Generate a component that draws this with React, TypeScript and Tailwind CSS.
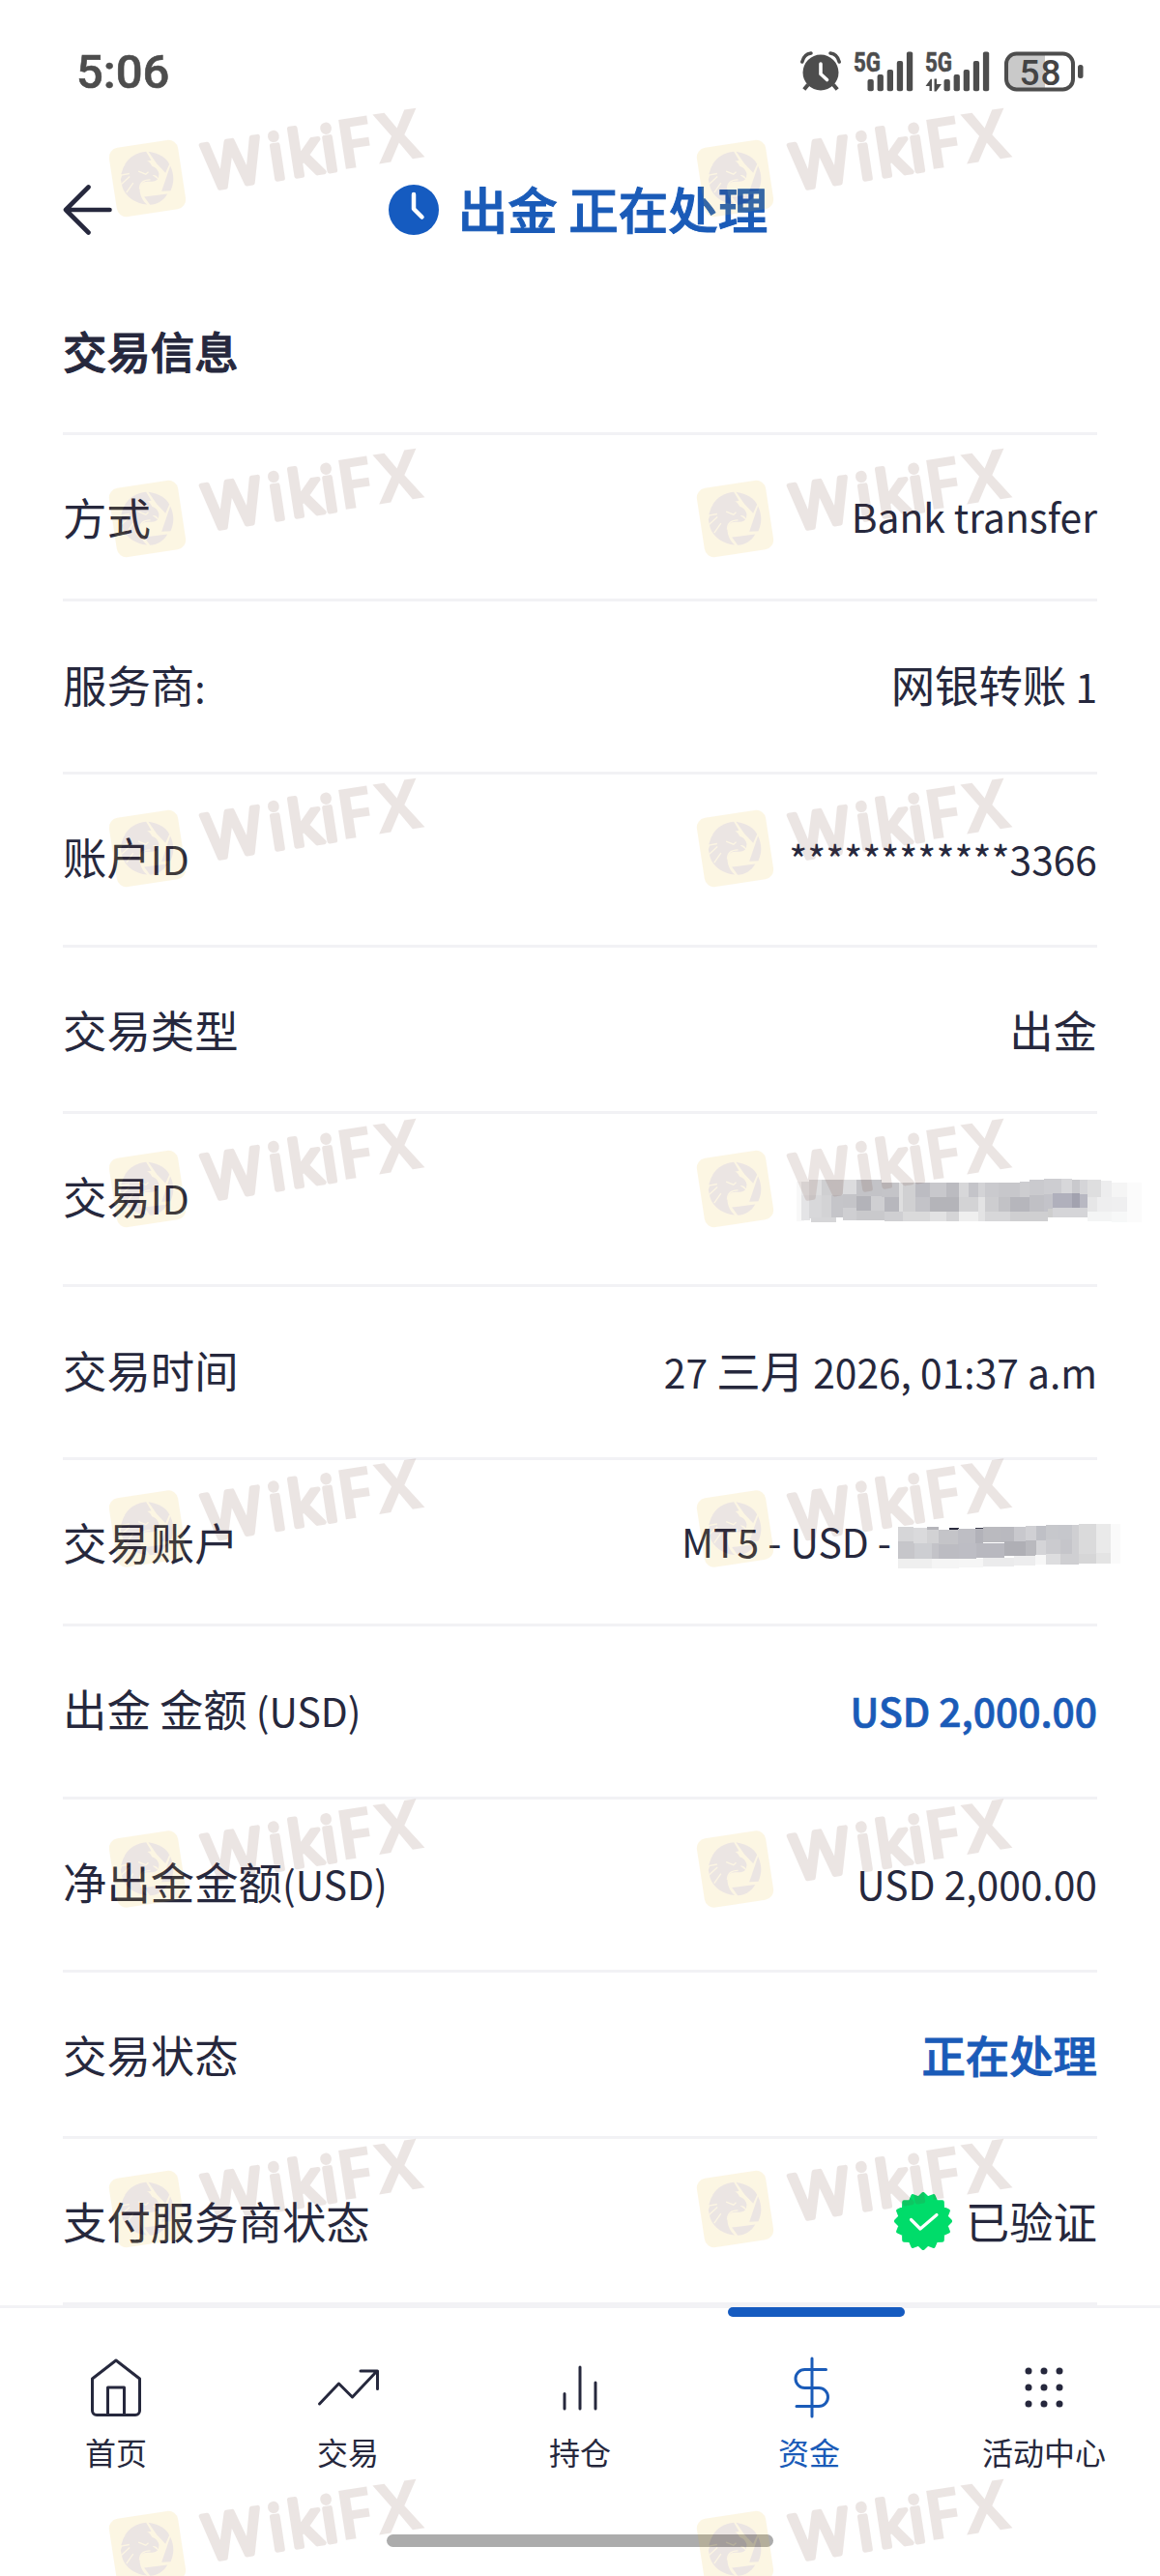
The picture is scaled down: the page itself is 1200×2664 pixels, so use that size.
import React from 'react';

type Detail = {
  label: string;
  value: React.ReactNode;
  tall?: boolean;
  lower?: boolean;
};

type Mosaic = [number, number, number, number, string][];

// x, y, width, height, color of every block
const ID_BLOCKS: Mosaic = [
  [0, 3, 8, 41, '#f8f8f8'], [5, 3, 9, 14, '#e9e9ea'], [5, 17, 9, 26, '#e4e4e6'],
  [13, 1, 13, 16, '#dededf'], [13, 17, 13, 24, '#d8d8da'], [26, 1, 22, 17, '#cfcfd1'],
  [26, 17, 10, 24, '#d3d3d5'], [36, 17, 12, 23, '#c5c5c9'], [15, 40, 26, 5, '#d6d6d8'],
  [48, 1, 14, 16, '#dcdcde'], [48, 16, 14, 14, '#c4c4c8'], [48, 30, 14, 13, '#cfcfd2'],
  [62, 1, 26, 17, '#c3c3c7'], [62, 18, 15, 15, '#b3b3b9'], [77, 18, 14, 15, '#cfcfd2'],
  [62, 33, 29, 10, '#c9c9cc'], [88, 4, 18, 15, '#c4c4c8'], [91, 19, 15, 15, '#b7b7bd'],
  [91, 34, 19, 10, '#cfcfd2'], [106, 4, 4, 30, '#dededf'], [110, 4, 13, 30, '#d0d0d2'],
  [110, 34, 28, 10, '#dadadb'], [123, 4, 15, 15, '#bcbcc2'], [123, 19, 15, 15, '#c3c3c8'],
  [138, 4, 17, 15, '#c8c8cc'], [138, 19, 30, 15, '#b4b4b9'], [138, 34, 17, 10, '#e2e2e3'],
  [155, 4, 13, 15, '#bbbbc0'], [155, 34, 13, 10, '#d5d5d7'], [168, 4, 10, 15, '#d7d7d9'],
  [178, 4, 10, 15, '#c4c4c9'], [168, 19, 20, 15, '#d3d3d5'], [168, 34, 20, 10, '#efefef'],
  [188, 4, 7, 15, '#d3d3d6'], [188, 19, 7, 25, '#e3e3e4'], [195, 4, 14, 15, '#cacace'],
  [195, 19, 14, 15, '#cdcdd0'], [195, 34, 28, 10, '#d7d7d9'], [209, 4, 22, 15, '#c7c7cb'],
  [209, 19, 12, 15, '#c2c2c6'], [221, 19, 20, 15, '#b6b6bc'], [221, 34, 39, 10, '#cfcfd1'],
  [231, 3, 10, 16, '#cdcdd0'], [241, 1, 15, 16, '#cacace'], [241, 17, 15, 17, '#c0c0c5'],
  [256, 0, 18, 16, '#cdcdd1'], [256, 16, 9, 18, '#c3c3c9'], [260, 31, 26, 9, '#cecece'],
  [265, 15, 20, 15, '#b0b0bc'], [274, 0, 11, 15, '#d7d7da'], [285, 1, 9, 14, '#c9c9cd'],
  [285, 15, 8, 15, '#a2a2af'], [293, 1, 8, 15, '#d5d5d8'], [293, 16, 8, 14, '#b8b8c2'],
  [265, 30, 36, 10, '#d5d5d8'], [301, 1, 14, 18, '#dededf'], [301, 19, 10, 15, '#e6e6e7'],
  [301, 34, 25, 10, '#f4f5f5'], [311, 19, 15, 15, '#eeeeef'], [315, 2, 11, 17, '#ededee'],
  [326, 4, 16, 15, '#f5f5f5'], [326, 19, 16, 15, '#efeff0'], [326, 34, 16, 11, '#f7f8f8'],
  [342, 4, 15, 41, '#fbfbfb'],
];

const ACCOUNT_BLOCKS: Mosaic = [
  [0, 3, 16, 17, '#d6d6d8'], [0, 18, 17, 18, '#c6c6ca'], [0, 36, 35, 10, '#efefef'],
  [16, 4, 14, 16, '#dadadc'], [17, 20, 18, 16, '#cdced2'], [30, 3, 12, 3, '#b5b5ba'],
  [30, 6, 12, 14, '#d2d2d4'], [35, 20, 7, 16, '#c3c3c8'], [42, 6, 20, 15, '#c4c4c8'],
  [42, 21, 21, 16, '#bcbcc2'], [35, 36, 28, 10, '#f5f5f5'], [53, 4, 10, 2, '#2a2b3e'],
  [80, 4, 8, 2, '#3c3d4e'], [62, 5, 18, 16, '#bebec4'], [63, 20, 18, 16, '#bdbdc4'],
  [63, 36, 25, 9, '#f6f6f6'], [80, 5, 8, 15, '#b2b2b9'], [88, 3, 18, 16, '#bababf'],
  [81, 20, 29, 15, '#b8b8bf'], [88, 35, 32, 9, '#ebebec'], [106, 3, 14, 16, '#b9b9bf'],
  [110, 18, 22, 15, '#afafb5'], [120, 3, 12, 15, '#c8c8cd'], [120, 33, 22, 10, '#ededee'],
  [132, 2, 11, 15, '#d0d0d4'], [132, 17, 11, 16, '#b9b9be'], [143, 2, 10, 15, '#bfc0c6'],
  [143, 17, 10, 15, '#d4d4d7'], [142, 32, 11, 10, '#f7f7f7'], [153, 1, 12, 15, '#c7c8cc'],
  [153, 16, 15, 16, '#cbcbcf'], [153, 31, 15, 11, '#dddddf'], [165, 1, 15, 15, '#c6c7cc'],
  [168, 16, 12, 15, '#c5c5ca'], [168, 31, 12, 11, '#cfcfd2'], [180, 1, 7, 41, '#cfcfd2'],
  [187, 0, 18, 31, '#dadadb'], [187, 31, 18, 10, '#d6d6d7'], [205, 0, 15, 31, '#eaeaea'],
  [205, 30, 15, 11, '#e4e4e4'], [220, 0, 10, 41, '#fafafa'],
];

const MosaicStrip = ({ blocks, width, height }: { blocks: Mosaic; width: number; height: number }) => (
  <svg width={width} height={height} viewBox={`0 0 ${width} ${height}`} shapeRendering="crispEdges">
    {blocks.map(([x, y, w, h, fill], i) => (
      <rect key={i} x={x} y={y} width={w} height={h} fill={fill} />
    ))}
  </svg>
);

// Latin letters and digits are set a little smaller than the Chinese around them
const Mixed = ({ children }: { children: string }) => (
  <span className="whitespace-pre">
    {children.split(/([\u4e00-\u9fff]+)/).map((part, i) =>
      i % 2 === 0 ? (
        <span key={i} className="text-[40.75px]">
          {part}
        </span>
      ) : (
        part
      )
    )}
  </span>
);

const VerifiedBadge = () => {
  const points: string[] = [];
  for (let i = 0; i < 32; i++) {
    const radius = i % 2 === 0 ? 28 : 24;
    const angle = (i * Math.PI) / 16 - Math.PI / 2;
    points.push(`${(30 + radius * Math.cos(angle)).toFixed(2)},${(30 + radius * Math.sin(angle)).toFixed(2)}`);
  }
  return (
    <svg width="60" height="60" viewBox="0 0 60 60" fill="none">
      <polygon points={points.join(' ')} fill="#00dc6a" stroke="#00dc6a" strokeWidth="4" strokeLinejoin="round" />
      <path d="M17.5 28.5 27 38 44 23.5" stroke="#fff" strokeWidth="3.2" strokeLinecap="round" strokeLinejoin="round" />
    </svg>
  );
};

const DETAILS: Detail[] = [
  {
    label: '方式',
    value: (
      <span className="pb-1.5">
        <Mixed>Bank transfer</Mixed>
      </span>
    ),
  },
  { label: '服务商:', value: <Mixed>网银转账 1</Mixed>, tall: true, lower: true },
  { label: '账户ID', value: <Mixed>************3366</Mixed>, tall: true },
  { label: '交易类型', value: '出金' },
  {
    label: '交易ID',
    value: (
      <span className="mt-2.5 -mr-[46px]">
        <MosaicStrip blocks={ID_BLOCKS} width={357} height={45} />
      </span>
    ),
    tall: true,
  },
  { label: '交易时间', value: <Mixed>27 三月 2026, 01:37 a.m</Mixed>, tall: true, lower: true },
  {
    label: '交易账户',
    value: (
      <span className="-mr-6 flex items-center gap-[7px]">
        <span className="pb-1.5">
          <Mixed>MT5 - USD -</Mixed>
        </span>
        <span className="mt-[9px]">
          <MosaicStrip blocks={ACCOUNT_BLOCKS} width={230} height={46} />
        </span>
      </span>
    ),
  },
  {
    label: '出金 金额 (USD)',
    value: (
      <span className="font-medium text-[#1a5bb8] [-webkit-text-stroke:0.7px_#1a5bb8]">
        <Mixed>USD 2,000.00</Mixed>
      </span>
    ),
    tall: true,
  },
  { label: '净出金金额(USD)', value: <Mixed>USD 2,000.00</Mixed>, tall: true },
  {
    label: '交易状态',
    value: <span className="font-medium text-[#1a5bb8] [-webkit-text-stroke:0.9px_#1a5bb8]">正在处理</span>,
  },
  {
    label: '支付服务商状态',
    value: (
      <span className="flex items-center gap-3.5">
        <VerifiedBadge />
        已验证
      </span>
    ),
  },
];

const Signal = ({ data }: { data?: boolean }) => (
  <svg
    className="overflow-visible"
    width={data ? 67 : 62}
    height="42"
    viewBox={data ? '0 0 67 42' : '0 0 62 42'}
    fill="#4d4d4d"
  >
    <text
      x="0"
      y="20.5"
      textLength="28"
      lengthAdjust="spacingAndGlyphs"
      fontFamily="Roboto, sans-serif"
      fontWeight="700"
      fontSize="27.5"
      stroke="#4d4d4d"
      strokeWidth="0.6"
    >
      5G
    </text>
    {data && <path d="M0.5 36 6 28.5 7 29v12H4.5v-5zM9.5 28.5H12V34h5L11.5 41.5H9.5z" />}
    {[29, 24, 19, 10, 0.5].map((y, i) => (
      <rect key={i} x={(data ? 19.5 : 14.5) + i * 10.1} y={y} width="6.3" height={41.3 - y} rx="2" />
    ))}
  </svg>
);

const StatusBar = () => (
  <div className="flex h-[148px] items-center justify-between pr-[78px] pl-[79px] font-[Roboto,sans-serif] text-[#4d4d4d]">
    <span className="text-[49px] leading-none font-medium [-webkit-text-stroke:0.6px_#4d4d4d]">5:06</span>
    <div className="flex items-center">
      <svg width="42" height="42" viewBox="0 0 42 42" fill="none">
        <circle cx="21" cy="22" r="18.5" fill="#4d4d4d" />
        <path d="M1.8 11C3 6 6.5 2.5 11 2M40.2 11C39 6 35.5 2.5 31 2" stroke="#4d4d4d" strokeWidth="3.5" strokeLinecap="round" />
        <path d="M8 34.5 3.8 39.5M34 34.5l4.2 5" stroke="#4d4d4d" strokeWidth="4" />
        <path d="M21 13v10.5l6.5 6" stroke="#fff" strokeWidth="3.6" strokeLinecap="round" />
      </svg>
      <span className="ml-[13px] flex gap-3">
        <Signal />
        <Signal data />
      </span>
      <svg className="ml-[15px]" width="83" height="42" viewBox="0 0 83 42" fill="none">
        <path d="M12 2h30v38H12A10 10 0 0 1 2 30V12A10 10 0 0 1 12 2z" fill="#c9c9c9" />
        <rect x="2" y="2.5" width="69" height="37" rx="10.5" stroke="#4d4d4d" strokeWidth="4" />
        <rect x="76" y="14" width="5.5" height="14" rx="2.5" fill="#4d4d4d" />
        <text x="15.5" y="34.5" textLength="43" fontFamily="Roboto, sans-serif" fontWeight="500" fontSize="37" fill="#444">
          58
        </text>
      </svg>
    </div>
  </div>
);

const Header = () => (
  <header className="relative flex h-[138px] items-center justify-center pr-1">
    <button className="absolute left-[65px]" aria-label="Back">
      <svg width="52" height="52" viewBox="0 0 52 52" fill="none" stroke="#26283d" strokeWidth="4.6" strokeLinecap="round" strokeLinejoin="round">
        <path d="M26.5 2.5 3 26l23.5 23.5M3 26h45.5" />
      </svg>
    </button>
    <svg className="mr-5" width="52" height="52" viewBox="0 0 52 52" fill="none">
      <circle cx="26" cy="26" r="26" fill="#155bc0" />
      <path d="M26 10v15l8.5 8.5" stroke="#fff" strokeWidth="4.5" strokeLinecap="round" strokeLinejoin="round" />
    </svg>
    <h1 className="pb-[5px] text-[51.5px] leading-none font-medium text-[#1a5bb8] [-webkit-text-stroke:1px_#1a5bb8]">
      出金 正在处理
    </h1>
  </header>
);

const NAV_ITEMS = [
  {
    label: '首页',
    icon: (
      <>
        <path d="M7.5 23 32 4l24.5 19v33a4.5 4.5 0 0 1-4.5 4.5H12A4.5 4.5 0 0 1 7.5 56z" />
        <path d="M23.5 60V32h17v28" />
      </>
    ),
  },
  { label: '交易', icon: <path d="M2.5 49 22.5 28l14 14L62 15M45 15h17.5v18.5" /> },
  { label: '持仓', icon: <path d="M16 38.5V54M32 11v43M48 27v27" /> },
  {
    label: '资金',
    active: true,
    icon: <path d="M32 2v60M46.5 13.5H24.5a9.5 9.5 0 0 0 0 19h14.5a9.5 9.5 0 0 1 0 19H16" />,
  },
  {
    label: '活动中心',
    icon: (
      <g fill="#26283d" stroke="none">
        {[15, 32, 49].map((y) => [16, 32, 48].map((x) => <circle key={`${x}-${y}`} cx={x} cy={y} r="3.5" />))}
      </g>
    ),
  },
];

const BottomNav = () => (
  <nav className="relative h-[280px] border-t-3 border-[#f2f2f5] bg-white">
    <div className="absolute -top-px left-[753px] h-2.5 w-[183px] rounded-full bg-[#155bc0]" />
    <div className="grid grid-cols-5 pt-[49px]">
      {NAV_ITEMS.map((item) => (
        <button key={item.label} className={item.active ? 'flex flex-col items-center text-[#1a5bb8]' : 'flex flex-col items-center text-[#26283d]'}>
          <svg
            width="66"
            height="66"
            viewBox="-1 -1 66 66"
            fill="none"
            stroke="currentColor"
            strokeWidth="3"
            strokeLinecap="round"
            strokeLinejoin="round"
          >
            {item.icon}
          </svg>
          <span className={item.active ? 'mt-[15px] mr-1.5 text-[32px] leading-[36px]' : 'mt-[15px] text-[32px] leading-[36px]'}>
            {item.label}
          </span>
        </button>
      ))}
    </div>
    <div className="mx-auto mt-[68px] h-[13px] w-[400px] rounded-full bg-[#acacac]" />
  </nav>
);

// Group origin is the centre of the logo tile
const Watermark = ({ x, y }: { x: number; y: number }) => (
  <g transform={`translate(${x} ${y})`} opacity="0.13">
    <g transform="rotate(-8.7)">
      <rect x="-36" y="-36" width="72" height="72" rx="10" fill="#eebc2f" />
      <g fill="#6e3d30" stroke="#6e3d30" fontWeight="400">
        <text
          x="59.5 127 147.5 182"
          y="21"
          fontFamily="Noto Sans, sans-serif"
          fontSize="65"
          strokeWidth="5"
          strokeLinejoin="round"
          strokeLinecap="round"
        >
          Wiki
        </text>
        <text x="198 239" y="21.5" fontFamily="Noto Sans, sans-serif" fontSize="72" fontWeight="700" stroke="none">
          FX
        </text>
      </g>
    </g>
    <g transform="scale(0.3333) translate(-181 -289)" fill="#6e3d30">
      <path d="M110 247C125 222 150 208 177 206L193 233Z" />
      <path d="M184 206C215 210 240 225 249 245L237 272 210 243Z" />
      <path d="M252 250C265 280 264 300 253 327L225 329Z" />
      <path d="M171 346 243 337C232 358 210 370 189 371Z" />
      <path d="M106 256C114 238 132 228 154 229 176 229 190 237 195 251 207 255 215 264 217 275L215 288C210 280 204 278 197 279L213 291C206 298 196 299 188 299 168 296 157 306 157 322 157 342 168 362 180 370 145 368 112 345 103 315L98 292 103 277 99 277Z" />
      <path d="M153 267 176 276 184 269M99 279 125 274M101 306 126 283M116 333 137 303" stroke="#eebc2f" strokeWidth="4" fill="none" />
      <path d="M157 322C157 304 168 293 190 293" stroke="#eebc2f" strokeWidth="4" fill="none" />
    </g>
  </g>
);

const WATERMARK_ROWS = [184.5, 536.5, 877.5, 1229.5, 1581, 1933, 2284.5, 2636.5];

const App: React.FC = () => {
  return (
    <div className="relative h-[2664px] w-[1200px] overflow-hidden bg-white font-['Noto_Sans_CJK_SC',sans-serif] text-[#26283d]">
      <StatusBar />
      <Header />

      <main className="h-[2098px] px-[65px]">
        <h2 className="flex h-[164px] items-center border-b-3 border-[#f2f2f5] pb-2 text-[45.4px] leading-none font-medium [-webkit-text-stroke:1px_#26283d]">
          交易信息
        </h2>
        {DETAILS.map((item) => (
          <div
            key={item.label}
            className={
              item.tall
                ? `flex h-[179px] items-center justify-between border-b-3 border-[#f2f2f5] text-[45.4px] leading-none ${item.lower ? 'pb-1' : 'pb-[7px]'}`
                : 'flex h-[172px] items-center justify-between border-b-3 border-[#f2f2f5] text-[45.4px] leading-none'
            }
          >
            <Mixed>{item.label}</Mixed>
            <span className="flex items-center">{item.value}</span>
          </div>
        ))}
      </main>

      <BottomNav />

      <svg className="pointer-events-none absolute inset-0" width="1200" height="2664" viewBox="0 0 1200 2664">
        {WATERMARK_ROWS.map((y) => (
          <React.Fragment key={y}>
            <Watermark x={152.5} y={y} />
            <Watermark x={760.5} y={y} />
          </React.Fragment>
        ))}
      </svg>
    </div>
  );
};

export default App;
